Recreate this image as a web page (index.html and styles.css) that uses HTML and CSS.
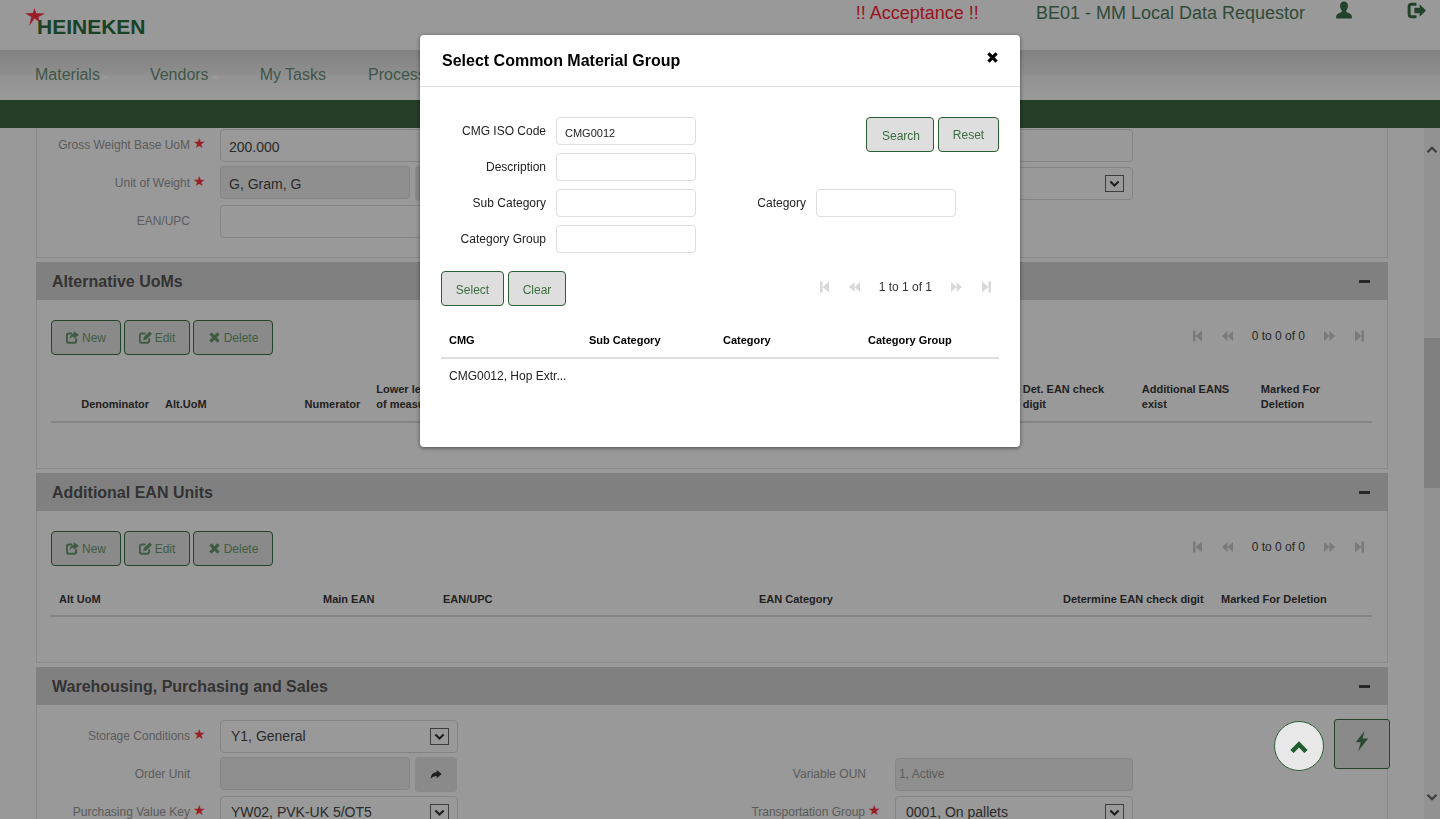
FILE: index.html
```html
<!DOCTYPE html>
<html lang="en">
<head>
    <meta charset="UTF-8">
    <title>Select Common Material Group</title>
    <link rel="stylesheet" href="styles.css">
</head>
<body>

<!-- shared icons -->
<svg class="sprite" xmlns="http://www.w3.org/2000/svg">
    <symbol id="i-new" viewBox="0 0 16 16"><path d="M7.500 3H3.500A2.500 2.500 0 0 0 1 5.500V12a2.500 2.500 0 0 0 2.500 2.500H10a2.500 2.500 0 0 0 2.500-2.500V9" fill="none" stroke="currentColor" stroke-width="2.600"/><path d="M9.500 0L16 4.800 9.500 9.600V7C7 7 5.500 8 4.500 10.500c0-4 2-7 5-7z" fill="currentColor"/></symbol>
    <symbol id="i-edit" viewBox="0 0 16 16"><path d="M8 3H3.500A2.500 2.500 0 0 0 1 5.500V12a2.500 2.500 0 0 0 2.500 2.500H10a2.500 2.500 0 0 0 2.500-2.500V9" fill="none" stroke="currentColor" stroke-width="2.400"/><path d="M13 0.500l3 3L9 10.500l-4 1 1-4z" fill="currentColor"/></symbol>
    <symbol id="i-x" viewBox="0 0 16 16"><path d="M3 3l10 10M13 3L3 13" fill="none" stroke="currentColor" stroke-width="4"/></symbol>
    <symbol id="i-minus" viewBox="0 0 11 3"><rect width="11" height="3" rx="0.500" fill="currentColor"/></symbol>
    <symbol id="i-first" viewBox="0 0 11 12"><rect x="1" y="0.500" width="2.500" height="11" fill="currentColor"/><path d="M10 0.500v11L3.500 6z" fill="currentColor"/></symbol>
    <symbol id="i-prev" viewBox="0 0 11 12"><path d="M5.500 1v10L0 6zM11 1v10L5.500 6z" fill="currentColor"/></symbol>
    <symbol id="i-next" viewBox="0 0 11 12"><path d="M0 1v10l5.500-5zM5.500 1v10L11 6z" fill="currentColor"/></symbol>
    <symbol id="i-last" viewBox="0 0 11 12"><path d="M1 0.500v11L7.500 6z" fill="currentColor"/><rect x="7.500" y="0.500" width="2.500" height="11" fill="currentColor"/></symbol>
    <symbol id="i-down" viewBox="0 0 16 16"><path d="M2 5l6 6 6-6" fill="none" stroke="currentColor" stroke-width="3"/></symbol>
    <symbol id="i-up" viewBox="0 0 16 16"><path d="M2 11l6-6 6 6" fill="none" stroke="currentColor" stroke-width="3"/></symbol>
    <symbol id="i-up-bold" viewBox="0 0 18 12"><path d="M2 10.500l7-7 7 7" fill="none" stroke="currentColor" stroke-width="4.500"/></symbol>
    <symbol id="i-share" viewBox="0 0 16 16"><path d="M9 2.500L15.500 8 9 13.500V10.500C5.500 10.500 3 11.500 1 14.500c0-5.500 3-9 8-9z" fill="currentColor"/></symbol>
</svg>

<header class="top-bar">
    <div class="logo">
        <svg class="logo-star" viewBox="0 0 20 18"><path d="M9.500 0l1.700 5.200L20 5.600l-6.600 3.300 1 5.100-4.800-3.600-5.600 7.600 2.300-8.900L0 5.300l7.800-.2z"/></svg>
        <span class="logo-text">HEINEKEN</span>
    </div>
    <div class="top-right">
        <span class="env-name">!! Acceptance !!</span>
        <span class="role-name">BE01 - MM Local Data Requestor</span>
        <svg class="top-user" viewBox="0 0 16 16"><path d="M8 0c2.200 0 3.500 1.700 3.500 4 0 1.700-.8 3.200-1.600 4 0 .9.200 1.400 1 1.800 1.600.7 3.600 1.400 4.100 3V15H1v-2.200c.5-1.600 2.500-2.300 4.100-3 .8-.4 1-.9 1-1.800-.8-.8-1.600-2.300-1.600-4C4.500 1.700 5.800 0 8 0z" fill="currentColor"/></svg>
        <svg class="top-logout" viewBox="0 0 18 16"><path d="M9 2H4.500A2.500 2.500 0 0 0 2 4.500v7A2.500 2.500 0 0 0 4.500 14H9" fill="none" stroke="currentColor" stroke-width="2.800"/><path d="M7 5.500h5V2l6 6-6 6v-3.500H7z" fill="currentColor"/></svg>
    </div>
</header>

<nav class="main-nav">
    <a href="#">Materials</a>
    <a href="#">Vendors</a>
    <a href="#" class="plain tasks">My Tasks</a>
    <a href="#" class="processes">Processes</a>
</nav>
<div class="green-bar"></div>

<div class="page-body">
    <main class="content">

        <section class="panel">
            <div class="panel-body form-panel">
                <div class="form-grid">
                    <label>Gross Weight Base UoM</label><span class="req">★</span>
                    <input type="text" value="200.000">
                    <span></span><span></span>
                    <input type="text">

                    <label>Unit of Weight</label><span class="req">★</span>
                    <div class="input-group"><input type="text" value="G, Gram, G" disabled><button class="go-btn"><svg class="icon-12"><use href="#i-share"/></svg></button></div>
                    <span></span><span></span>
                    <div class="select"><svg class="select-arrow"><use href="#i-down"/></svg></div>

                    <label>EAN/UPC</label><span></span>
                    <input type="text">
                </div>
            </div>
        </section>

        <section class="panel">
            <div class="panel-head">
                <h2>Alternative UoMs</h2>
                <svg class="minus"><use href="#i-minus"/></svg>
            </div>
            <div class="panel-body">
                <div class="toolbar">
                    <div class="btn-row">
                        <button class="btn btn-new"><svg class="icon-13"><use href="#i-new"/></svg> New</button>
                        <button class="btn btn-edit"><svg class="icon-13"><use href="#i-edit"/></svg> Edit</button>
                        <button class="btn btn-delete"><svg class="icon-13"><use href="#i-x"/></svg> Delete</button>
                    </div>
                    <div class="pager">
                        <svg><use href="#i-first"/></svg>
                        <svg><use href="#i-prev"/></svg>
                        <span>0 to 0 of 0</span>
                        <svg><use href="#i-next"/></svg>
                        <svg><use href="#i-last"/></svg>
                    </div>
                </div>
                <table class="grid grid-tall">
                    <colgroup>
                        <col class="c106"><col class="c133"><col class="c78"><col class="c646"><col class="c119"><col class="c119"><col class="c119">
                    </colgroup>
                    <thead>
                        <tr>
                            <th class="right">Denominator</th>
                            <th>Alt.UoM</th>
                            <th class="right">Numerator</th>
                            <th>Lower level unit<br>of measure</th>
                            <th>Det. EAN check digit</th>
                            <th>Additional EANS exist</th>
                            <th>Marked For Deletion</th>
                        </tr>
                    </thead>
                </table>
            </div>
        </section>

        <section class="panel">
            <div class="panel-head">
                <h2>Additional EAN Units</h2>
                <svg class="minus"><use href="#i-minus"/></svg>
            </div>
            <div class="panel-body">
                <div class="toolbar">
                    <div class="btn-row">
                        <button class="btn btn-new"><svg class="icon-13"><use href="#i-new"/></svg> New</button>
                        <button class="btn btn-edit"><svg class="icon-13"><use href="#i-edit"/></svg> Edit</button>
                        <button class="btn btn-delete"><svg class="icon-13"><use href="#i-x"/></svg> Delete</button>
                    </div>
                    <div class="pager">
                        <svg><use href="#i-first"/></svg>
                        <svg><use href="#i-prev"/></svg>
                        <span>0 to 0 of 0</span>
                        <svg><use href="#i-next"/></svg>
                        <svg><use href="#i-last"/></svg>
                    </div>
                </div>
                <table class="grid">
                    <colgroup>
                        <col class="c264"><col class="c120"><col class="c316"><col class="c304"><col class="c158"><col class="c159">
                    </colgroup>
                    <thead>
                        <tr>
                            <th>Alt UoM</th>
                            <th>Main EAN</th>
                            <th>EAN/UPC</th>
                            <th>EAN Category</th>
                            <th>Determine EAN check digit</th>
                            <th>Marked For Deletion</th>
                        </tr>
                    </thead>
                </table>
            </div>
        </section>

        <section class="panel">
            <div class="panel-head">
                <h2>Warehousing, Purchasing and Sales</h2>
                <svg class="minus"><use href="#i-minus"/></svg>
            </div>
            <div class="panel-body form-panel-top">
                <div class="form-grid">
                    <label>Storage Conditions</label><span class="req">★</span>
                    <div class="select"><span>Y1, General</span><svg class="select-arrow"><use href="#i-down"/></svg></div>
                    <span></span><span></span><span></span>

                    <label>Order Unit</label><span></span>
                    <div class="input-group"><input type="text" disabled><button class="go-btn"><svg class="icon-12"><use href="#i-share"/></svg></button></div>
                    <label class="label-wide">Variable OUN</label><span></span>
                    <input type="text" class="small-value" value="1, Active" disabled>

                    <label>Purchasing Value Key</label><span class="req">★</span>
                    <div class="select"><span>YW02, PVK-UK 5/OT5</span><svg class="select-arrow"><use href="#i-down"/></svg></div>
                    <label>Transportation Group</label><span class="req">★</span>
                    <div class="select"><span>0001, On pallets</span><svg class="select-arrow"><use href="#i-down"/></svg></div>
                </div>
            </div>
        </section>

    </main>

    <div class="scrollbar">
        <svg class="scroll-arrow"><use href="#i-up"/></svg>
        <div class="scroll-thumb"></div>
        <svg class="scroll-arrow scroll-arrow-down"><use href="#i-down"/></svg>
    </div>
</div>

<button class="fab-action"><svg viewBox="0 0 16 16"><path d="M10 0L3 9h4l-2 7 8-10H8.500z" fill="currentColor"/></svg></button>

<div class="backdrop">
    <div class="modal">
        <div class="modal-head">
            <h1>Select Common Material Group</h1>
            <svg class="modal-close"><use href="#i-x"/></svg>
        </div>
        <div class="modal-body">
            <div class="modal-form">
                <label>CMG ISO Code</label>
                <input type="text" value="CMG0012">
                <div class="search-btns">
                    <button class="btn btn-light btn-search">Search</button>
                    <button class="btn btn-light btn-reset">Reset</button>
                </div>

                <label>Description</label>
                <input type="text">
                <span class="form-gap"></span>

                <label>Sub Category</label>
                <input type="text">
                <label>Category</label>
                <input type="text">
                <span></span>

                <label>Category Group</label>
                <input type="text">
            </div>

            <div class="toolbar modal-toolbar">
                <div class="btn-row">
                    <button class="btn btn-light btn-select">Select</button>
                    <button class="btn btn-light btn-clear">Clear</button>
                </div>
                <div class="pager pager-light">
                    <svg><use href="#i-first"/></svg>
                    <svg><use href="#i-prev"/></svg>
                    <span>1 to 1 of 1</span>
                    <svg><use href="#i-next"/></svg>
                    <svg><use href="#i-last"/></svg>
                </div>
            </div>

            <table class="grid grid-modal">
                <colgroup>
                    <col class="c140"><col class="c134"><col class="c145"><col class="c139">
                </colgroup>
                <thead>
                    <tr>
                        <th>CMG</th>
                        <th>Sub Category</th>
                        <th>Category</th>
                        <th>Category Group</th>
                    </tr>
                </thead>
                <tbody>
                    <tr>
                        <td class="nowrap">CMG0012, Hop Extr...</td>
                        <td></td>
                        <td></td>
                        <td></td>
                    </tr>
                </tbody>
            </table>
        </div>
    </div>
</div>

<button class="fab-top"><svg><use href="#i-up-bold"/></svg></button>

</body>
</html>
```

FILE: styles.css
```css
* { box-sizing: border-box; }
html, body { margin: 0; height: 100%; }
body { font-family: "Liberation Sans", Arial, sans-serif; font-size: 12px; background: #fff; color: #444; overflow: hidden; display: flex; flex-direction: column; height: 819px; }
.sprite { display: none; }
button { font-family: inherit; }

/* top bar */
.top-bar { height: 50px; flex: none; display: flex; justify-content: space-between; background: #fff; }
.logo { position: relative; width: 200px; padding: 15px 0 0 37px; }
.logo-star { position: absolute; left: 25px; top: 8px; width: 20px; height: 18px; fill: #ff3344; }
.logo-text { font-size: 21px; font-weight: bold; line-height: 24px; color: #2a6e40; }
.top-right { display: flex; align-items: flex-start; padding-right: 14px; font-size: 18px; line-height: 26px; }
.env-name { color: #ff2233; margin-right: 57px; }
.role-name { color: #4f7d60; margin-right: 30px; }
.top-user { width: 18px; height: 19px; margin: 1px 54px 0 0; color: #3a6f46; }
.top-logout { width: 19px; height: 17px; margin-top: 2px; color: #3a6f46; }

/* nav */
.main-nav { height: 50px; flex: none; display: flex; gap: 50px; padding: 14px 0 0 35px; font-size: 16px; line-height: 22px; background: linear-gradient(#d8d8d8, #eee 50%, #f4f4f4 50%, #fff); }
.main-nav a { position: relative; color: #6a8f78; text-decoration: none; }
.main-nav a::after { content: ""; position: absolute; right: -10px; top: 11px; border: 4px solid transparent; border-bottom: 4px solid #fff; border-top: 0; }
.main-nav a.plain::after { display: none; }
.main-nav a.tasks { margin-left: 1px; }
.main-nav a.processes { margin-left: -8px; }
.green-bar { height: 28px; flex: none; background: #3c6a40; }

/* page */
.page-body { flex: 1; min-height: 0; display: flex; }
.content { width: 1424px; flex: none; padding: 0 36px; overflow: hidden; }
.panel { margin-bottom: 4px; }
.panel-head { height: 38px; display: flex; align-items: center; justify-content: space-between; padding: 0 18px 0 16px; background: #d5d5d5; }
.panel-head h2 { margin: 0; padding-top: 1px; font-size: 16px; color: #555; }
.minus { width: 11px; height: 3px; color: #444; }
.panel-body { border: 1px solid #e5e5e5; border-top: 0; padding: 20px 15px 45px 14px; }
.form-panel { padding: 1px 0 19px; }
.form-panel-top { padding: 15px 0 0; }

/* forms */
.form-grid { display: grid; grid-template-columns: 153px 30px 238px 407px 30px 238px; grid-template-rows: 33px 35px 33px; row-gap: 4px; align-items: center; }
.form-grid label { text-align: right; color: #999; padding-bottom: 2px; }
.form-grid label.label-wide { margin-right: -1px; }
.req { color: #ff3344; font-family: "DejaVu Sans", sans-serif; font-size: 14px; line-height: 14px; padding-left: 3px; margin-top: -6px; }
input { font-family: inherit; }
.form-grid input { width: 100%; height: 33px; border: 1px solid #ddd; border-radius: 4px; background: #fff; padding: 2px 8px 0; font-size: 14px; color: #484848; }
.form-grid input:disabled { background: #eee; }
.form-grid input.small-value { font-size: 12px; padding: 0 3px 2px; color: #999; }
.input-group { display: flex; gap: 5px; height: 35px; }
.input-group input { width: 190px; height: 33px; flex: none; }
.go-btn { width: 42px; height: 35px; border: 0; border-radius: 4px; background: #e6e6e6; color: #333; padding: 0 0 2px; display: flex; align-items: center; justify-content: center; }
.select { height: 33px; display: flex; align-items: center; justify-content: space-between; border: 1px solid #ddd; border-radius: 4px; background: #fff; padding: 0 8px 0 10px; font-size: 14px; color: #484848; }
.select span { flex: 1; padding-bottom: 1px; }
.select-arrow { width: 19px; height: 17px; flex: none; margin-left: auto; border: 1px solid #666; color: #333; padding: 1px 3px; }
.icon-12 { width: 12px; height: 12px; }
.icon-13 { width: 13px; height: 13px; }

/* buttons and pager */
.toolbar { display: flex; justify-content: space-between; align-items: flex-start; padding-right: 7px; }
.btn-row { display: flex; gap: 3px; }
.btn { height: 35px; border: 1px solid #3f6f47; border-radius: 4px; background: #e6e6e6; color: #699a71; font-size: 12px; display: flex; align-items: center; justify-content: center; gap: 3px; padding: 0; }
.btn-new { width: 70px; }
.btn-edit { width: 66px; }
.btn-delete { width: 80px; }
.btn-light { border-color: #2c5e33; background: #dedede; color: #3c6e40; }
.btn-search { width: 68px; padding: 2px 0 0 2px; }
.btn-reset { width: 61px; }
.btn-select { width: 63px; padding-top: 2px; }
.btn-clear { width: 58px; padding-top: 2px; }
.pager { display: flex; align-items: center; gap: 19px; height: 32px; color: #444; }
.pager svg { width: 11px; height: 12px; color: #ccc; }
.pager-light { color: #333; }
.pager-light svg { color: #d8d8d8; }

/* tables */
.grid { width: 100%; border-collapse: collapse; table-layout: fixed; margin-top: 26px; }
.grid th { text-align: left; vertical-align: bottom; font-size: 11px; line-height: 15px; padding: 0 8px 8px; color: #383838; border-bottom: 2px solid #ddd; }
.grid th.right { text-align: right; }
.grid-tall { margin-top: 27px; }
.grid-tall th { padding-bottom: 9px; }
.c106 { width: 106px; } .c133 { width: 133px; } .c78 { width: 78px; } .c646 { width: 646px; } .c119 { width: 119px; }
.c264 { width: 264px; } .c120 { width: 120px; } .c316 { width: 316px; } .c304 { width: 304px; } .c158 { width: 158px; } .c159 { width: 159px; }
.c140 { width: 140px; } .c134 { width: 134px; } .c145 { width: 145px; } .c139 { width: 139px; }

/* scrollbar */
.scrollbar { width: 16px; flex: none; display: flex; flex-direction: column; align-items: center; background: #f4f4f4; }
.scroll-arrow { width: 12px; height: 12px; color: #666; margin-top: 16px; flex: none; }
.scroll-thumb { width: 100%; height: 150px; margin-top: 182px; background: #d5d5d5; flex: none; }
.scroll-arrow-down { margin-top: 303px; }

/* floating buttons */
.fab-action { position: fixed; left: 1334px; top: 719px; width: 56px; height: 50px; border: 1px solid #3f6f47; border-radius: 3px; background: #e6e6e6; color: #467b50; padding: 0 0 3px; }
.fab-action svg { width: 20px; height: 20px; }
.fab-top { position: fixed; z-index: 20; left: 1274px; top: 721px; width: 50px; height: 50px; border: 1px solid #2c5e33; border-radius: 50%; background: #e8e8e8; color: #1f5c2e; padding: 1px 0 0; display: flex; align-items: center; justify-content: center; }
.fab-top svg { width: 18px; height: 12px; }

/* modal */
.backdrop { position: fixed; inset: 0; z-index: 10; background: rgba(0, 0, 0, 0.4); display: flex; justify-content: center; align-items: flex-start; padding-top: 35px; }
.modal { width: 600px; height: 412px; background: #fff; border-radius: 4px; box-shadow: 0 1px 4px rgba(0, 0, 0, 0.5); color: #222; }
.modal-head { height: 52px; display: flex; align-items: center; justify-content: space-between; padding: 0 21px 0 22px; border-bottom: 1px solid #ddd; }
.modal-head h1 { margin: 0; font-size: 16px; color: #000; }
.modal-close { width: 13px; height: 13px; color: #000; margin-top: -6px; }
.modal-body { padding: 30px 21px 0; }
.modal-form { display: grid; grid-template-columns: 105px 140px 100px 140px 1fr; grid-auto-rows: 28px; gap: 8px 10px; align-items: center; height: 135px; }
.modal-form label { text-align: right; }
.modal-form input { width: 140px; height: 28px; border: 1px solid #ddd; border-radius: 4px; padding: 3px 8px 0; font-size: 11px; color: #222; }
.search-btns { grid-column: 3 / 6; justify-self: end; align-self: start; display: flex; gap: 4px; }
.form-gap { grid-column: 3 / 6; }
.modal-toolbar { margin-top: 19px; }
.modal-toolbar .btn-row { gap: 4px; }
.grid-modal { margin-top: 27px; }
.grid-modal th { color: #000; padding-bottom: 9px; }
.grid-modal td { padding: 10px 8px; font-size: 12px; line-height: 15px; color: #222; }
.nowrap { white-space: nowrap; }
```
